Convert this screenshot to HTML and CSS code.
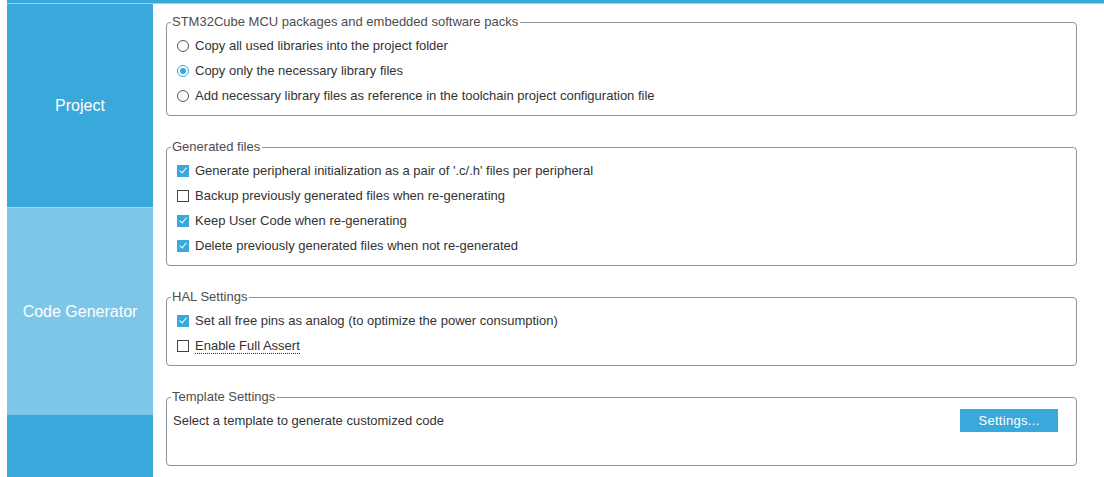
FILE: index.html
```html
<!DOCTYPE html>
<html lang="en">
<head>
    <meta charset="UTF-8">
    <title>Project Manager - Code Generator</title>
    <link rel="stylesheet" href="styles.css">
</head>
<body>

    <div class="top-bar"></div>

    <div class="main">
        <!-- Menu lateral -->
        <div class="sidebar">
            <div class="nav-item nav-project">Project</div>
            <div class="nav-item nav-active">Code Generator</div>
            <div class="nav-rest"></div>
        </div>

        <div class="content">
            <fieldset class="group group-packs">
                <legend>STM32Cube MCU packages and embedded software packs</legend>
                <label class="option"><span class="radio"></span>Copy all used libraries into the project folder</label>
                <label class="option"><span class="radio checked"></span>Copy only the necessary library files</label>
                <label class="option"><span class="radio"></span>Add necessary library files as reference in the toolchain project configuration file</label>
            </fieldset>

            <fieldset class="group">
                <legend>Generated files</legend>
                <label class="option"><span class="check checked"></span>Generate peripheral initialization as a pair of '.c/.h' files per peripheral</label>
                <label class="option"><span class="check"></span>Backup previously generated files when re-generating</label>
                <label class="option"><span class="check checked"></span>Keep User Code when re-generating</label>
                <label class="option"><span class="check checked"></span>Delete previously generated files when not re-generated</label>
            </fieldset>

            <fieldset class="group">
                <legend>HAL Settings</legend>
                <label class="option"><span class="check checked"></span>Set all free pins as analog (to optimize the power consumption)</label>
                <label class="option"><span class="check"></span><span class="dotted">Enable Full Assert</span></label>
            </fieldset>

            <fieldset class="group group-template">
                <legend>Template Settings</legend>
                <div class="template-row">
                    <span>Select a template to generate customized code</span>
                    <button class="settings-btn">Settings...</button>
                </div>
            </fieldset>
        </div>
    </div>

</body>
</html>
```

FILE: styles.css
```css
body {
    margin: 0;
    padding-left: 7px;
    font-family: "Liberation Sans", Arial, sans-serif;
    font-size: 13px;
    color: #333;
    background: #fff;
    height: 477px;
    overflow: hidden;
    display: flex;
    flex-direction: column;
}

.top-bar {
    height: 3px;
    background: #39a9dc;
    border-bottom: 1px solid #8fd1f0;
}

.main {
    flex: 1;
    display: flex;
}

/* Menu lateral */
.sidebar {
    width: 146px;
    display: flex;
    flex-direction: column;
    background: #39a9dc;
}
.nav-item {
    display: flex;
    align-items: center;
    justify-content: center;
    color: #fff;
    font-size: 16px;
}
.nav-project {
    height: 203px;
    border-bottom: 1px solid #9fd6f0;
}
.nav-active {
    height: 207px;
    background: #7cc6e8;
}
.nav-rest {
    flex: 1;
}

.content {
    flex: 1;
    padding: 10px 27px 0 13px;
    display: flex;
    flex-direction: column;
    gap: 23px;
}

.group {
    margin: 0;
    padding: 3px 10px 7px 10px;
    border: 1px solid #8e9399;
    border-radius: 4px;
}
.group legend {
    padding: 0 2px 0 1px;
    margin-left: -6px;
    color: #4d4d4d;
    line-height: 16px;
}

.option {
    display: flex;
    align-items: center;
    height: 25px;
    gap: 6px;
}

.radio {
    width: 10px;
    height: 10px;
    border: 1px solid #555;
    border-radius: 50%;
    position: relative;
}
.radio.checked {
    border-color: #39a9dc;
}
.radio.checked::after {
    content: "";
    position: absolute;
    left: 2px;
    top: 2px;
    width: 6px;
    height: 6px;
    border-radius: 50%;
    background: #39a9dc;
}

.check {
    width: 10px;
    height: 10px;
    border: 1px solid #444;
    position: relative;
}
.check.checked {
    background: #39a9dc;
    border-color: #39a9dc;
}
.check.checked::after {
    content: "";
    position: absolute;
    left: 3px;
    top: 0px;
    width: 3px;
    height: 6px;
    border: solid #fff;
    border-width: 0 1.5px 1.5px 0;
    transform: rotate(40deg);
}

.dotted {
    border-bottom: 1px dotted #333;
    line-height: 15px;
}

.group-template {
    height: 64px;
    padding-top: 4px;
}
.template-row {
    display: flex;
    justify-content: space-between;
    align-items: center;
    margin-left: -4px;
    margin-right: 8px;
}
.settings-btn {
    width: 98px;
    height: 23px;
    border: none;
    background: #39a9dc;
    color: #fff;
    font-family: "Liberation Sans", Arial, sans-serif;
    font-size: 13px;
    letter-spacing: 0.3px;
}
```
